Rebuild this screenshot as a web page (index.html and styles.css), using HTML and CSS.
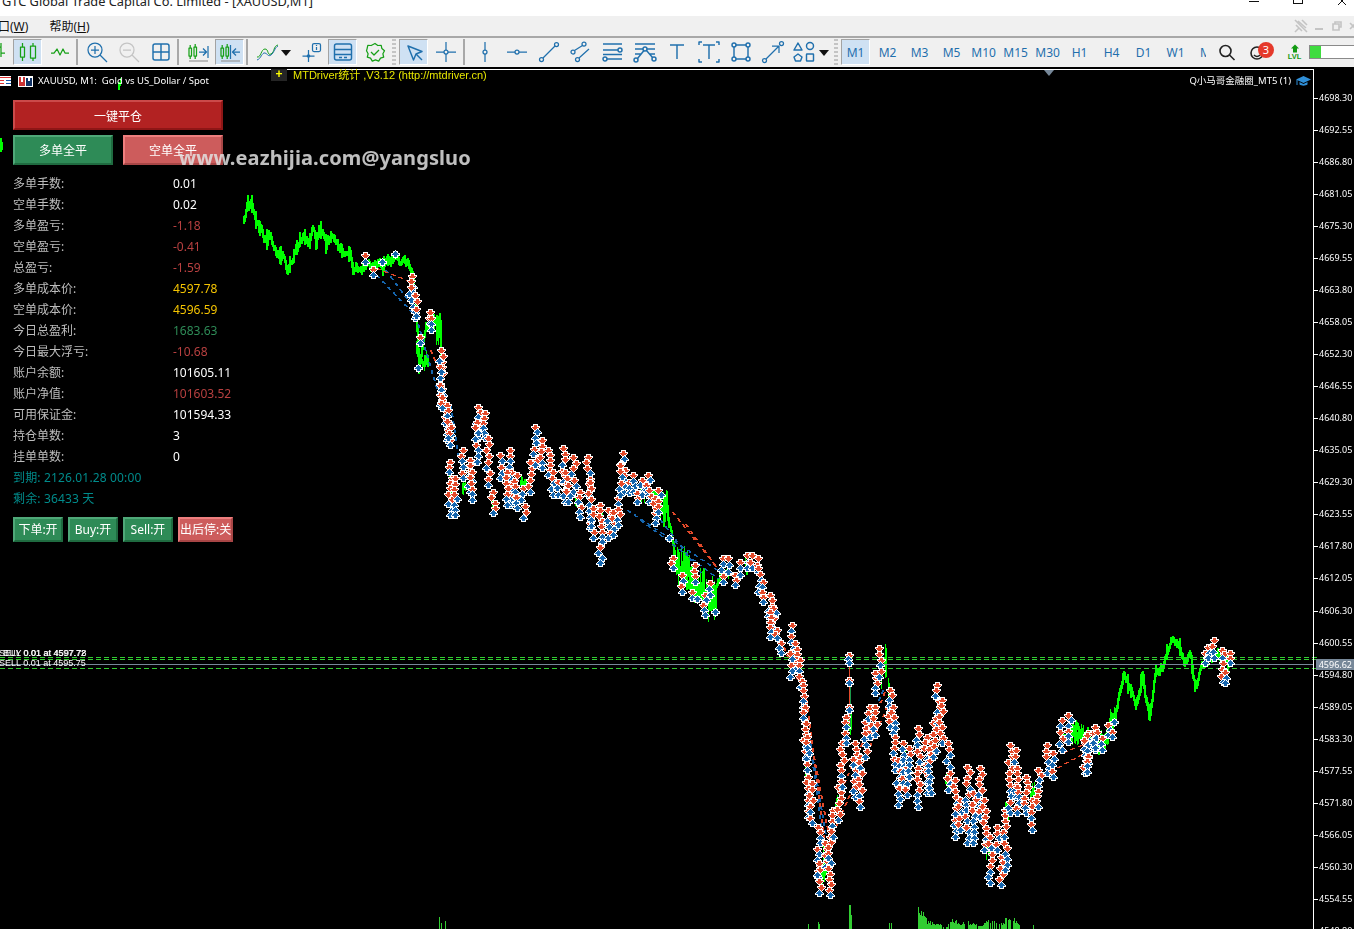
FILE: index.html
```html
<!DOCTYPE html>
<html lang="zh">
<head>
<meta charset="utf-8">
<title>GTC Global Trade Capital Co. Limited - [XAUUSD,M1]</title>
<link rel="stylesheet" href="styles.css">
</head>
<body>
<div class="app">
  <header class="titlebar">
    <span class="title-text">GTC Global Trade Capital Co. Limited - [XAUUSD,M1]</span>
    <div class="win-controls">
      <i class="win-min"></i>
      <i class="win-max"></i>
      <svg class="win-close" width="12" height="8" viewBox="0 0 12 8"><path d="M1 -3L9 5M9 -3L1 5"/></svg>
    </div>
  </header>

  <nav class="menubar">
    <span class="menu-clip">窗口(<u>W</u>)</span>
    <span class="menu-item">帮助(<u>H</u>)</span>
    <div class="mdi-controls">
      <svg class="mdi-pin" width="14" height="14" viewBox="0 0 14 14"><path d="M4 2l8 7M8 1l5 5M2 6l6 6M5 9l-4 4M1 1l12 12"/></svg>
      <i class="mdi-min"></i>
      <svg class="mdi-restore" width="10" height="10" viewBox="0 0 10 10"><path d="M3 3V1h6v5H7M1 3h6v6H1z"/></svg>
      <svg class="mdi-close" width="8" height="8" viewBox="0 0 8 8"><path d="M1 1l6 6M7 1L1 7"/></svg>
    </div>
  </nav>

  <div class="toolbar">
    <button class="tb tb-first"><svg class="ic g" viewBox="0 0 24 24"><path d="M7 5v14M3 9h4M7 15h4M17 3v14M13 7h4M17 13h4"/></svg></button>
    <button class="tb on"><svg class="ic g" viewBox="0 0 24 24"><rect x="4.500" y="7" width="4" height="10"/><rect x="14.500" y="6" width="5" height="12"/><path d="M6.500 3v4M6.500 17v4M17 3v3M17 18v3"/></svg></button>
    <button class="tb"><svg class="ic g" viewBox="0 0 24 24"><path d="M3 13h3l3-4 3 6 3-6 2 4h4"/></svg></button>
    <i class="sep"></i>
    <button class="tb"><svg class="ic b" viewBox="0 0 24 24"><circle cx="10" cy="10" r="7"/><path d="M10 6v8M6 10h8M15 15l7 7"/></svg></button>
    <button class="tb"><svg class="ic gr" viewBox="0 0 24 24"><circle cx="10" cy="10" r="7"/><path d="M6 10h8M15 15l7 7"/></svg></button>
    <button class="tb"><svg class="ic b thick" viewBox="0 0 24 24"><rect x="4" y="4" width="16" height="16" rx="2"/><path d="M12 4v16M4 12h16"/></svg></button>
    <i class="sep"></i>
    <button class="tb"><svg class="ic" viewBox="0 0 24 24"><g class="g"><rect x="3" y="8" width="2.500" height="8"/><rect x="8" y="7" width="2.500" height="9"/><path d="M4.200 5v3M4.200 16v3M9.200 4v3M9.200 16v3"/></g><g class="b"><path d="M13 12h7M17 8.500l3.500 3.500-3.500 3.500M22 6v12"/></g><path class="gl" d="M3 21h19"/></svg></button>
    <button class="tb on"><svg class="ic" viewBox="0 0 24 24"><g class="g"><rect x="3" y="8" width="2.500" height="8"/><rect x="8" y="7" width="2.500" height="9"/><path d="M4.200 5v3M4.200 16v3M9.200 4v3M9.200 16v3"/></g><g class="b"><path d="M14 12h8M18 8.500L14.500 12l3.500 3.500"/></g><path class="b" d="M12.500 5v14"/><path class="gl" d="M3 21h19"/></svg></button>
    <i class="sep"></i>
    <button class="tb"><svg class="ic thin" viewBox="0 0 24 24"><path class="g" d="M2 17c4 1 4-8 8-8s2 7 6 5 2-8 7-9"/><path class="b" d="M2 20c4-1 5-8 8-7s3 4 6 2 4-8 7-9"/></svg></button>
    <span class="caret"></span>
    <button class="tb"><svg class="ic b" viewBox="0 0 24 24"><path d="M9.500 10v12M3.500 16h12"/><circle cx="9.500" cy="16" r="1.200"/><rect x="13.500" y="3.500" width="8" height="8" rx="1.500"/><path d="M17.500 5v1M17.500 7v3"/></svg></button>
    <button class="tb on"><svg class="ic b thick" viewBox="0 0 24 24"><rect x="3.500" y="4" width="17" height="16" rx="2"/><path d="M3.500 9.500h17M3.500 14.500h17M8 17.500h3M13 17.500h3"/></svg></button>
    <button class="tb"><svg class="ic g" viewBox="0 0 24 24"><path d="M12 3.500l2.800 2 3.400-.2.700 3.300 2.600 2.200-1.600 3 .8 3.300-3.200 1-1.800 3-3.200-1.200-3.200 1.200-1.800-3-3.200-1 .8-3.300-1.600-3L4.100 8.600l.7-3.300 3.400.2z"/><path d="M8 12l3 3 5-5"/></svg></button>
    <i class="grip"></i>
    <button class="tb on"><svg class="ic b thick" viewBox="0 0 24 24"><path d="M6 6l14 5.500-6 2.500-2.500 6z"/><path d="M14 14l6 6"/></svg></button>
    <button class="tb"><svg class="ic b" viewBox="0 0 24 24"><circle cx="12" cy="12" r="2"/><path d="M12 2v8M12 14v8M2 12h8M14 12h8"/></svg></button>
    <i class="sep sep-wide"></i>
    <button class="tb"><svg class="ic b" viewBox="0 0 24 24"><circle cx="12" cy="12" r="2"/><path d="M12 2v8M12 14v8"/></svg></button>
    <button class="tb"><svg class="ic b" viewBox="0 0 24 24"><circle cx="12" cy="12" r="2"/><path d="M2 12h8M14 12h8"/></svg></button>
    <button class="tb"><svg class="ic b" viewBox="0 0 24 24"><circle cx="4.500" cy="19.500" r="2"/><circle cx="19.500" cy="4.500" r="2"/><path d="M6 18L18 6"/></svg></button>
    <button class="tb"><svg class="ic b" viewBox="0 0 24 24"><circle cx="4" cy="12" r="2"/><circle cx="15" cy="4" r="2"/><circle cx="8.500" cy="19.500" r="2"/><path d="M5.500 10.500L13.500 5.500M10 18l10-9"/></svg></button>
    <button class="tb"><svg class="ic b thick" viewBox="0 0 24 24"><circle cx="19" cy="10" r="2"/><circle cx="4" cy="19" r="2"/><path d="M2 4h19M2 10h15M2 14.500h19M6 19h15"/></svg></button>
    <button class="tb"><svg class="ic b thick" viewBox="0 0 24 24"><circle cx="12" cy="9" r="2"/><circle cx="3" cy="20" r="2"/><circle cx="21" cy="19" r="2"/><path d="M2 4h20M2 9h8M14 9h8M4.500 18.500L11 10.500M13.500 10.500l6 7M2 14h6M16 14h6"/></svg></button>
    <button class="tb"><svg class="ic b thick" viewBox="0 0 24 24"><path d="M5 5h14M12 5v14"/></svg></button>
    <button class="tb"><svg class="ic b thick" viewBox="0 0 24 24"><path d="M6 5h12M12 5v14M5 2H2v3M19 2h3v3M2 19v3h3M22 19v3h-3"/></svg></button>
    <button class="tb"><svg class="ic b thick" viewBox="0 0 24 24"><rect x="5" y="5" width="14" height="14"/><circle cx="5" cy="5" r="2" class="fw"/><circle cx="19" cy="5" r="2" class="fw"/><circle cx="5" cy="19" r="2" class="fw"/><circle cx="19" cy="19" r="2" class="fw"/></svg></button>
    <button class="tb"><svg class="ic b" viewBox="0 0 24 24"><circle cx="3.500" cy="20.500" r="2"/><circle cx="20.500" cy="3.500" r="2"/><path d="M5 19L18 6M11 6h7v7"/></svg></button>
    <button class="tb"><svg class="ic b thick" viewBox="0 0 24 24"><path d="M5 3L1 10h8z"/><circle cx="17" cy="6" r="3.500"/><path d="M5 14l4 3-1.500 4h-5L1 17z"/><rect x="13.500" y="14" width="7" height="7" rx=".5"/></svg></button>
    <span class="caret"></span>
    <i class="grip grip-tf"></i>
    <button class="tb tf on">M1</button>
    <button class="tb tf">M2</button>
    <button class="tb tf">M3</button>
    <button class="tb tf">M5</button>
    <button class="tb tf">M10</button>
    <button class="tb tf">M15</button>
    <button class="tb tf">M30</button>
    <button class="tb tf">H1</button>
    <button class="tb tf">H4</button>
    <button class="tb tf">D1</button>
    <button class="tb tf">W1</button>
    <button class="tb tf tf-clip">MN</button>
    <button class="tb tb-search"><svg class="ic k" viewBox="0 0 24 24"><circle cx="11.500" cy="11" r="5.500"/><path d="M15.500 15l5 5"/></svg></button>
    <button class="tb tb-chat"><svg class="ic k" viewBox="0 0 24 24"><circle cx="11" cy="13" r="6"/><path d="M8 15c2 2 4 2 6 0"/></svg><span class="badge">3</span></button>
    <button class="tb tb-lvl"><svg width="10" height="9" viewBox="0 0 10 9"><path d="M5 .5L9 4.500H7V8.500H3V4.500H1z"/></svg><span>LVL</span></button>
    <div class="progress"><i class="progress-fill"></i></div>
  </div>

  <main class="chart">
    <canvas id="plot" class="plot" width="1354" height="862"></canvas>
    <div class="frame"></div>
    <i class="shift-mark"></i>

    <div class="chart-head">
      <svg class="head-list" width="12" height="10" viewBox="0 0 12 10"><rect width="12" height="10" fill="#fff"/><path d="M0 1.500h12" stroke="#d33"/><path d="M0 4.500h5M0 7.500h5" stroke="#d33"/><path d="M7 4.500h5M7 7.500h5" stroke="#15a"/></svg>
      <svg class="head-sym" width="15" height="11" viewBox="0 0 15 11"><rect width="15" height="11" fill="#fff"/><rect x="1" y="1" width="6" height="9" fill="#c33"/><rect x="3" y="1" width="2" height="5" fill="#fff"/><rect x="8" y="2" width="6" height="8" fill="#136"/><rect x="10" y="2" width="2" height="3" fill="#fff"/></svg>
      <span class="head-text">XAUUSD, M1:  Gold vs US_Dollar / Spot</span>
    </div>
    <div class="ea-tag"><b class="ea-plus">+</b><span class="ea-text">MTDriver统计 ,V3.12 (http://mtdriver.cn)</span></div>
    <div class="ea-name">
      <span>Q小马哥金融圈_MT5 (1)</span>
      <svg width="15" height="12" viewBox="0 0 15 12"><path d="M7.500 1L15 4.500 7.500 8 0 4.500z" fill="#2f8fd8"/><path d="M3.500 7v2.500c2 1.500 6 1.500 8 0V7L7.500 9z" fill="#2f8fd8"/><path d="M1 5v5" stroke="#2f8fd8"/></svg>
    </div>

    <div class="panel">
      <button class="pbtn red full">一键平仓</button>
      <div class="pbtn-row">
        <button class="pbtn green half">多单全平</button>
        <button class="pbtn rose half">空单全平</button>
      </div>
      <dl class="stats">
        <div class="stat"><dt>多单手数:</dt><dd>0.01</dd></div>
        <div class="stat"><dt>空单手数:</dt><dd>0.02</dd></div>
        <div class="stat"><dt>多单盈亏:</dt><dd class="loss">-1.18</dd></div>
        <div class="stat"><dt>空单盈亏:</dt><dd class="loss">-0.41</dd></div>
        <div class="stat"><dt>总盈亏:</dt><dd class="loss">-1.59</dd></div>
        <div class="stat"><dt>多单成本价:</dt><dd class="cost">4597.78</dd></div>
        <div class="stat"><dt>空单成本价:</dt><dd class="cost">4596.59</dd></div>
        <div class="stat"><dt>今日总盈利:</dt><dd class="gain">1683.63</dd></div>
        <div class="stat"><dt>今日最大浮亏:</dt><dd class="loss">-10.68</dd></div>
        <div class="stat"><dt>账户余额:</dt><dd>101605.11</dd></div>
        <div class="stat"><dt>账户净值:</dt><dd class="loss">101603.52</dd></div>
        <div class="stat"><dt>可用保证金:</dt><dd>101594.33</dd></div>
        <div class="stat"><dt>持仓单数:</dt><dd>3</dd></div>
        <div class="stat"><dt>挂单单数:</dt><dd>0</dd></div>
        <div class="stat stat-note">到期: 2126.01.28 00:00</div>
        <div class="stat stat-note">剩余: 36433 天</div>
      </dl>
      <div class="pbtn-row small">
        <button class="pbtn green s50">下单:开</button>
        <button class="pbtn green s50">Buy:开</button>
        <button class="pbtn green s50">Sell:开</button>
        <button class="pbtn rose s55">出后停:关</button>
      </div>
    </div>

    <div class="watermark">www.eazhijia.com@yangsluo</div>

    <div class="trade-label tl-a">BUY 0.01 at 4597.78</div>
    <div class="trade-label tl-a2">SELL 0.01 at 4597.72</div>
    <div class="trade-label tl-b">SELL 0.01 at 4595.75</div>

    <div class="axis">
      <span>4698.30</span><span>4692.55</span><span>4686.80</span><span>4681.05</span><span>4675.30</span><span>4669.55</span><span>4663.80</span><span>4658.05</span><span>4652.30</span><span>4646.55</span><span>4640.80</span><span>4635.05</span><span>4629.30</span><span>4623.55</span><span>4617.80</span><span>4612.05</span><span>4606.30</span><span>4600.55</span><span>4594.80</span><span>4589.05</span><span>4583.30</span><span>4577.55</span><span>4571.80</span><span>4566.05</span><span>4560.30</span><span>4554.55</span><span>4548.80</span>
    </div>
    <div class="price-tag">4596.62</div>
  </main>
</div>
<script src="chart.js"></script>
</body>
</html>
```
FILE: styles.css
```css
* { box-sizing: border-box; }
html, body { margin: 0; height: 100%; overflow: hidden; background: #000; }
body { font-family: "Noto Sans", "Noto Sans CJK SC", sans-serif; font-size: 12px; }
button { font: inherit; padding: 0; border: 0; background: none; }

.app { display: flex; flex-direction: column; width: 1354px; height: 929px; overflow: hidden; }

/* title bar */
.titlebar { flex: none; height: 16px; background: #fff; display: flex; overflow: hidden; position: relative; }
.title-text { margin: -8px 0 0 2px; font-size: 12.8px; line-height: 18px; color: #222; white-space: nowrap; height: 18px; }
.win-controls { margin-left: auto; display: flex; align-items: flex-start; }
.win-min { width: 10px; height: 1px; margin: 1px 34px 0 0; background: #111; }
.win-max { width: 10px; height: 5px; margin: -1px 34px 0 0; border: 1px solid #111; }
.win-close { margin-right: 5px; stroke: #111; fill: none; }

/* menu */
.menubar { flex: none; height: 20px; background: #f0f0f0; display: flex; align-items: center; gap: 21px; overflow: hidden; color: #111; }
.menu-clip { margin-left: -14px; }
.mdi-controls { margin-left: auto; display: flex; align-items: center; margin-right: -3px; fill: none; stroke: #c4c4c4; }
.mdi-controls svg { stroke-width: 1.6; }
.mdi-pin { margin-right: 7px; }
.mdi-min { width: 8px; height: 2px; background: #c4c4c4; margin: 5px 9px 0 0; }
.mdi-restore { margin-right: 7px; }

/* toolbar */
.toolbar { flex: none; height: 31px; background: #f0f0f0; border-top: 2px solid #a8a8a8; display: flex; align-items: center; overflow: hidden; padding-bottom: 1px; }
.tb { flex: none; position: relative; width: 29px; height: 26px; margin-left: 3px; display: flex; align-items: center; justify-content: center; border: 1px solid transparent; }
.tb.on { background: #cfe1f3; border-color: #a3a3a3 #fff #fff #a3a3a3; }
.tb-first { margin-left: -19px; }
.ic { width: 24px; height: 24px; flex: none; fill: none; stroke-width: 1.25; stroke-linejoin: round; }
.ic.thick { stroke-width: 1.45; }
.ic.thin { stroke-width: 1; }
.g { stroke: #17a017; }
.b { stroke: #2070ad; }
.gr { stroke: #c4c4c4; }
.k { stroke: #222; stroke-width: 1.6; }
.gl { stroke: #9a9a9a; }
.fw { fill: #f0f0f0; }
.sep { flex: none; width: 2px; height: 26px; margin: 0 1px 0 2px; background: #a8a8a8; }
.sep-wide { margin: 0 2px 0 3px; }
.grip { flex: none; width: 4px; height: 26px; margin-left: 3px; background: repeating-linear-gradient(#c4c4c4 0 2px, transparent 2px 4px); }
.grip-tf { margin-left: 3px; }
.caret { flex: none; width: 12px; height: 6px; position: relative; margin-top: 2px; }
.caret::before { content: ""; position: absolute; left: 0; top: 0; border: 5px solid transparent; border-top: 6px solid #111; border-bottom: 0; }
.tf { font-size: 12px; color: #1f6fad; letter-spacing: -.1px; }
.tf-clip { width: 14px; overflow: hidden; justify-content: flex-start; padding-left: 6px; }
.tb-search { margin-left: 4px; }
.tb-chat { overflow: visible; }
.badge { position: absolute; left: 14px; top: 2px; width: 16px; height: 16px; border-radius: 50%; background: #e5392b; color: #fff; font-size: 11px; line-height: 16px; text-align: center; }
.tb-lvl { margin-left: 8px; flex-direction: column; gap: 0; fill: #129a12; color: #129a12; font: 700 7.5px/8px "Liberation Sans", sans-serif; }
.progress { flex: none; width: 60px; height: 14px; margin-left: 0; border: 1px solid #8a8a8a; background: #fff; }
.progress-fill { display: block; width: 11px; height: 100%; background: #3fdc3f; }

/* chart */
.chart { flex: 1; position: relative; background: #000; overflow: hidden; color: #fff; }
.plot { display: block; position: absolute; left: 0; top: 0; }
.frame { position: absolute; left: 0; top: 2px; width: 1314px; bottom: 0; border-top: 1px solid #fff; border-right: 1px solid #fff; }
.shift-mark { position: absolute; left: 1044px; top: 3px; border: 5px solid transparent; border-top: 6px solid #778899; border-bottom: 0; }

.chart-head { position: absolute; left: -1px; top: 8px; display: flex; align-items: center; height: 12px; }
.head-sym { margin-left: 7px; }
.head-text { margin-left: 5px; font-size: 9.5px; line-height: 12px; white-space: pre; }
.ea-tag { position: absolute; left: 271px; top: 2px; display: flex; align-items: flex-start; height: 13px; }
.ea-plus { width: 16px; height: 12px; background: #252525; color: #ff0; font: 700 12px/11px "Liberation Sans", sans-serif; text-align: center; }
.ea-text { margin-left: 6px; font: 11px/12px "Liberation Sans", "Noto Sans CJK SC", sans-serif; color: #e6e600; white-space: nowrap; }
.ea-name { position: absolute; right: 43px; top: 8px; display: flex; align-items: center; gap: 5px; font-size: 9.5px; line-height: 12px; }

/* left panel */
.panel { position: absolute; left: 13px; top: 33px; width: 220px; }
.pbtn { display: block; color: #fff; border-style: solid; border-width: 2px; text-align: center; }
.pbtn.red { background: #b22222; border-color: #cb4a4a #8e1616 #8e1616 #cb4a4a; }
.pbtn.green { background: #2e8b57; border-color: #4fa878 #1f6b40 #1f6b40 #4fa878; }
.pbtn.rose { background: #cd5c5c; border-color: #ee7e7e #a84646 #a84646 #ee7e7e; }
.full { width: 210px; height: 30px; padding-top: 1px; }
.half { width: 100px; height: 30px; }
.pbtn-row { display: flex; gap: 10px; margin-top: 5px; }
.pbtn-row.small { gap: 5px; margin-top: 8px; }
.s50 { width: 50px; height: 25px; white-space: nowrap; padding-bottom: 1px; }
.s55 { width: 55px; height: 25px; white-space: nowrap; padding-bottom: 1px; }
.stats { margin: 8px 0 0; }
.stat { display: flex; height: 21px; align-items: center; color: #bdbdbd; line-height: 21px; }
.stat dt { width: 160px; }
.stat dd { margin: 0; color: #fff; }
.stat dd.loss { color: #b84040; }
.stat dd.cost { color: #f5c400; }
.stat dd.gain { color: #2e8b57; }
.stat-note { color: #008b8b; letter-spacing: .15px; }

.watermark { position: absolute; left: 179px; top: 77px; font: 700 20px/28px "Noto Sans", sans-serif; letter-spacing: .1px; color: rgba(225, 225, 225, .85); white-space: nowrap; }

.trade-label { position: absolute; left: 0; font: 9px/10px "Liberation Sans", sans-serif; color: #fff; white-space: nowrap; }
.tl-a { top: 581px; left: 3px; }
.tl-a2 { top: 581px; left: -1px; }
.tl-b { top: 591px; left: -1px; }

/* price axis */
.axis { position: absolute; left: 1314px; top: 15px; width: 40px; display: flex; flex-direction: column; }
.axis span { flex: none; height: 32.04px; padding-left: 5px; font-size: 9px; line-height: 32px; position: relative; }
.axis span::before { content: ""; position: absolute; left: 0; top: 16px; width: 4px; height: 1px; background: #fff; }
.price-tag { position: absolute; left: 1316px; top: 592px; width: 38px; height: 11px; background: #778899; color: #fff; font-size: 9px; line-height: 11px; text-align: right; padding-right: 2px; }
```
FILE: chart.js
```js
(function () {
  var canvas = document.getElementById('plot');
  var ctx = canvas.getContext('2d');
  var OFFSET = 67; // canvas top in page pixels
  var RED = '#e2492a', BLUE = '#1565ad', GREEN = '#00ff00', WHITE = '#ffffff';

  var seed = 20260128;
  function rnd() {
    seed |= 0; seed = seed + 0x6D2B79F5 | 0;
    var t = Math.imul(seed ^ seed >>> 15, 1 | seed);
    t = t + Math.imul(t ^ t >>> 7, 61 | t) ^ t;
    return ((t ^ t >>> 14) >>> 0) / 4294967296;
  }
  function px(c, x, y, w, h) {
    ctx.fillStyle = c;
    ctx.fillRect(Math.round(x), Math.round(y) - OFFSET, w, h);
  }

  /* ---------- price line ---------- */
  var line = [[243,220],[247,203],[251,203],[255,222],[260,227],[263,242],[268,235],[277,255],[282,255],[287,273],[295,248],[303,235],[308,242],[312,228],[315,242],[320,227],[325,243],[330,235],[337,245],[343,252],[349,248],[352,272],[358,267],[365,265],[383,265],[395,258],[403,262],[411,270],[415,300],[418,372],[425,325],[440,318],[440,380],[445,410],[455,465],[460,490],[470,460],[480,420],[490,440],[500,470],[520,480],[535,440],[560,465],[580,490],[600,530],[622,470],[640,490],[665,500],[675,560],[690,590],[710,600],[720,570],[745,560],[760,580],[780,640],[800,680],[806,760],[820,860],[826,885],[835,810],[850,760],[880,650],[886,680],[900,770],[935,700],[950,800],[985,860],[1010,770],[1040,780],[1060,735],[1068,732],[1075,725],[1083,738],[1093,742],[1103,748],[1107,725],[1115,715],[1122,677],[1127,682],[1135,707],[1142,677],[1145,702],[1149,715],[1155,672],[1162,665],[1171,638],[1177,648],[1183,662],[1190,657],[1194,688],[1200,668],[1207,658],[1217,655],[1230,662]];
  // in these ranges the line is buried under the trade arrows
  function hidden(px_) { return (px_ > 445 && px_ < 652) || (px_ > 722 && px_ < 1062); }
  var i, x, y, n = 0, prevY = null;
  for (i = 0; i < line.length - 1; i++) {
    var a = line[i], b = line[i + 1];
    for (x = a[0]; x < b[0]; x++) {
      var t = (x - a[0]) / (b[0] - a[0]);
      n = n * 0.55 + (rnd() - 0.5) * 6;
      y = a[1] + (b[1] - a[1]) * t + n;
      var h = 4 + rnd() * 5;
      if (rnd() < 0.12) h += 5 + rnd() * 7;
      var top = y - h / 2, bot = y + h / 2;
      if (prevY !== null) { top = Math.min(top, prevY); bot = Math.max(bot, prevY); }
      if (!hidden(x)) px(GREEN, x, top, 2, Math.max(2, Math.round(bot - top)));
      prevY = y;
    }
  }
  // dense tick clusters that show between the trade arrows
  function blob(x1, x2, yTop, yBot) {
    for (var bx = x1; bx <= x2; bx++) {
      var p = rnd(), q = rnd();
      var y1 = yTop + (yBot - yTop) * p * 0.5;
      var y2 = yBot - (yBot - yTop) * q * 0.4;
      px(GREEN, bx, y1, 1, Math.max(1, Math.round(y2 - y1)));
    }
  }
  [[416,417,320,375],[422,428,350,372],[436,441,315,350],[440,441,330,380],[449,452,470,500],[462,465,480,495],
   [478,482,410,440],[492,494,495,512],[512,516,475,495],[520,526,475,490],[540,542,450,470],[575,577,490,510],
   [600,602,505,525],[640,645,480,505],[660,668,488,528],[676,690,545,590],[690,704,565,605],[706,716,575,622],
   [725,728,565,580],[745,750,555,575],
   [805,807,755,790],[818,822,860,893],[823,826,840,885],[835,838,790,815],[848,851,700,740],[881,882,645,700],[884,886,643,680],
   [888,889,675,700],[903,905,745,770],[945,947,770,790],[985,990,840,860],[1005,1008,800,830],[1030,1034,780,805],
   [1066,1088,722,745],[1100,1108,730,750],[1110,1116,705,730]].forEach(function (s) {
    blob(s[0], s[1], s[2], s[3]);
  });
  // fragments of earlier price action that poke into the frame
  px(GREEN, 0, 138, 2, 14);
  px(GREEN, 2, 142, 1, 8);
  px(GREEN, 118, 82, 2, 8);
  px(GREEN, 120, 78, 1, 8);

  /* ---------- dashed order lines ---------- */
  function dash(x1, y1, x2, y2, c) {
    var len = Math.hypot(x2 - x1, y2 - y1), d;
    for (d = 0; d < len; d += 8) {
      for (var k = 0; k < 4; k++) {
        var p = (d + k) / len;
        if (p <= 1) px(c, x1 + (x2 - x1) * p, y1 + (y2 - y1) * p, 2, 1);
      }
    }
  }
  var blueLines = [[376,275,415,316],[385,270,412,306],[415,316,448,430],[450,405,458,460],[627,510,717,570],[640,520,717,578],[660,520,700,572],[805,712,822,838],[808,735,825,835],[882,690,870,720]];
  var redLines = [[376,268,412,282],[672,512,717,568],[685,524,725,580],[806,700,823,838],[810,740,828,835],[835,827,893,690],[840,790,885,690],[1057,767,1085,752],[1063,752,1083,744],[780,640,806,700],[430,350,442,380]];
  blueLines.forEach(function (l) { dash(l[0], l[1], l[2], l[3], BLUE); });
  redLines.forEach(function (l) { dash(l[0], l[1], l[2], l[3], RED); });

  /* ---------- horizontal levels ---------- */
  function hdash(yy, c) {
    for (x = 0; x < 1313; x += 8) px(c, x, yy, 5, 1);
  }
  hdash(657, '#32cd32');
  hdash(659, '#32cd32');
  hdash(668, '#32cd32');
  px('#778899', 0, 664, 1313, 1);

  /* ---------- volume histogram ---------- */
  var fixedVol = [[439,12],[441,6],[445,8],[808,5],[818,7],[819,5],[849,24],[850,24],[851,14],[889,6],[891,6]];
  fixedVol.forEach(function (v) { px('#32cd32', v[0], 929 - v[1], 1, v[1]); });
  var env = [[918,27],[921,22],[925,12],[932,7],[940,5],[946,3],[950,10],[955,12],[960,5],[966,10],[972,7],[980,4],[987,11],[994,8],[1000,5],[1006,13],[1012,15],[1017,7],[1020,4]];
  for (i = 0; i < env.length - 1; i++) {
    for (x = env[i][0]; x < env[i + 1][0]; x++) {
      var tt = (x - env[i][0]) / (env[i + 1][0] - env[i][0]);
      var ev = env[i][1] + (env[i + 1][1] - env[i][1]) * tt;
      var vh = Math.round(ev * (0.45 + rnd() * 0.55));
      if (x > 936 && rnd() < 0.22) continue;
      px('#32cd32', x, 929 - vh, 1, vh);
    }
  }
  px('#32cd32', 1033, 925, 1, 4);

  /* ---------- trade arrows ---------- */
  var outline = [[-4,1],[-3,3],[-2,5],[-1,7],[0,9],[1,9],[2,5],[3,5]];
  var body = [[-3,1],[-2,3],[-1,5],[0,7],[1,3],[2,3]];
  function arrow(cx, cy, up) {
    var c = up ? BLUE : RED;
    cx = Math.round(cx); cy = Math.round(cy);
    outline.forEach(function (r) {
      var dy = up ? r[0] : -r[0];
      px(WHITE, cx - (r[1] - 1) / 2, cy + dy, r[1], 1);
    });
    body.forEach(function (r) {
      var dy = up ? r[0] : -r[0];
      px(c, cx - (r[1] - 1) / 2, cy + dy, r[1], 1);
    });
  }
  function spike(sx, top, bot) {
    var m = Math.max(1, Math.round((bot - top) / 5.5));
    for (var k = 0; k <= m; k++) {
      var yy = top + (bot - top) * k / m;
      var up;
      if (k === 0) up = false;
      else if (k === m) up = true;
      else up = rnd() < (k / m) * 0.5 + 0.15;
      arrow(sx + (k === 0 || k === m ? 0 : (rnd() - 0.5) * 5), yy, up);
    }
  }
  function group(ox, oy, arr) {
    arr.forEach(function (s) {
      spike(ox + s[0] / 3, oy + s[1] / 3, oy + s[2] / 3);
    });
  }

  // vertical links between isolated arrows
  px(RED, 849, 665, 1, 60); px('#1a9a4a', 850, 680, 1, 50);

  // early section, page coordinates
  [[365,255,262],[382,262,262],[373,269,275],[395,254,254],[412,276,292],[411,287,300],[415,295,318],[416,309,316],[430,312,323],[431,318,330],[420,337,343],[418,368,368],[442,362,400],[441,350,372],[440,385,405],[447,405,440],[450,425,445]].forEach(function (s) { spike(s[0], s[1], s[2]); });

  group(430, 395, [[35,5,40],[55,45,130],[60,200,360],[75,250,360],[100,165,250],[120,195,290],[125,230,315],[145,35,130],[165,55,130],[140,80,200],[175,130,270],[190,290,355],[210,180,250],[240,165,330],[230,230,330],[260,240,340],[280,280,370],[300,200,290],[315,95,210],[335,135,220],[355,165,240],[370,230,300],[385,260,300],[398,160,260],[405,230,320],[430,185,290],[415,270,320],[450,290,365],[475,185,300],[480,260,400],[490,340,430],[510,330,505],[535,345,430],[550,350,420],[565,310,390],[580,175,290],[570,210,300],[598,260,295],[610,240,290],[622,295,320],[637,255,300],[655,240,300],[658,285,320],[675,310,385],[685,285,350],[718,430,430],[728,490,520],[755,540,590],[785,590,610],[795,510,560],[800,612,612],[825,600,660],[840,565,600],[855,652,652],[880,490,560],[895,490,530],[915,540,570],[930,500,540],[950,480,520],[965,480,520],[985,490,530],[985,520,590],[1000,560,620],[1020,600,680],[1030,640,700]]);

  group(760, 610, [[30,5,80],[50,60,85],[62,100,130],[97,45,130],[105,100,180],[90,130,200],[120,150,230],[128,225,290],[135,290,340],[137,340,440],[140,380,480],[145,500,620],[155,520,640],[175,650,800],[178,760,850],[195,700,770],[210,680,855],[218,600,680],[235,530,630],[245,400,530],[258,320,400],[268,135,160],[268,210,220],[268,290,300],[285,400,560],[300,440,590],[315,335,440],[330,290,380],[345,290,375],[345,190,250],[358,115,200],[390,240,350],[400,290,370],[405,380,480],[415,450,585],[428,400,520],[440,470,555],[448,415,500],[475,355,590],[500,380,550],[512,400,550],[520,340,440],[532,225,340],[545,270,400],[565,400,540],[585,510,680],[600,570,660],[622,470,700],[640,550,700],[660,475,620],[672,570,720],[690,680,820],[710,650,720],[722,740,825],[735,600,780],[750,405,610],[768,420,560],[772,530,610],[798,500,610],[815,570,660],[835,480,590],[860,405,490],[880,430,500],[905,330,420],[925,315,395],[975,400,490],[985,370,460],[1005,350,420]]);

  group(1040, 625, [[140,330,440],[165,305,370],[185,340,375],[205,300,330],[215,320,335],[222,290,290],[495,85,115],[505,65,100],[522,45,100],[545,75,100],[570,85,115],[548,115,170],[555,140,175]]);
})();
```
